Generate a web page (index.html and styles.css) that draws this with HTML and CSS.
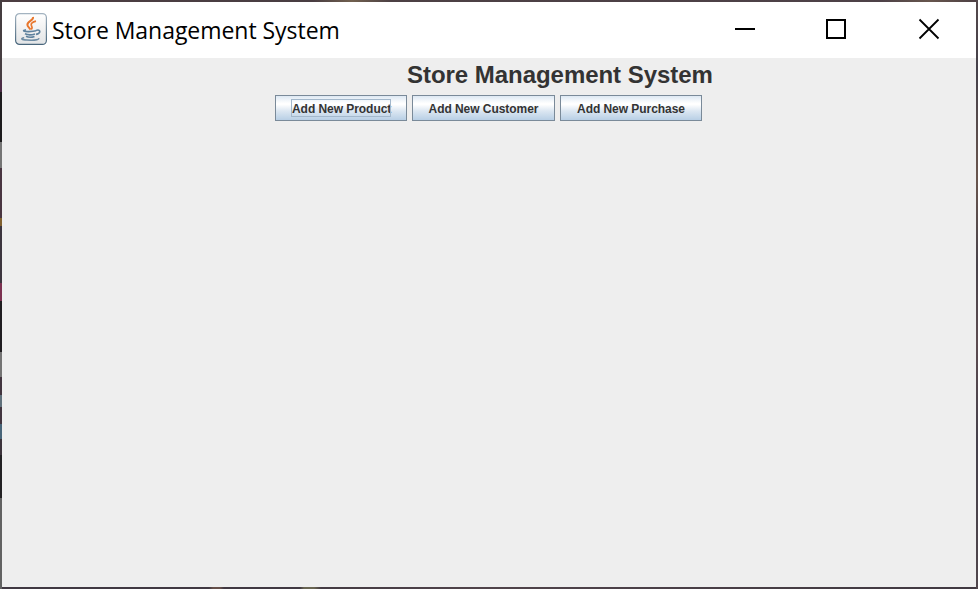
FILE: index.html
```html
<!DOCTYPE html>
<html lang="en">
<head>
<meta charset="utf-8">
<title>Store Management System</title>
<link rel="stylesheet" href="styles.css">
</head>
<body>
<div class="desktop">
  <div class="window">
    <header class="titlebar">
      <svg class="app-icon" width="32" height="32" viewBox="0 0 32 32" fill="none">
        <defs>
          <linearGradient id="tile" x1="0" y1="0" x2="0" y2="1"><stop offset="0" stop-color="#ffffff"/><stop offset=".4" stop-color="#f4f4f4"/><stop offset="1" stop-color="#e2e4e6"/></linearGradient>
          <linearGradient id="rim" x1="0" y1="0" x2="0" y2="1"><stop offset="0" stop-color="#a3b3c0"/><stop offset="1" stop-color="#48667c"/></linearGradient>
        </defs>
        <rect x=".6" y=".6" width="30.8" height="30.8" rx="4" fill="url(#tile)" stroke="url(#rim)" stroke-width="1.2"/>
        <path d="M18 4C19 7.5 12 8.2 12.4 12C12.6 13.7 14.6 14.8 15.5 16.6" stroke="#e8762c" stroke-width="2"/>
        <path d="M21 8.2C17.5 9 15.6 10.4 16.3 12.3C17 13.8 18 14.2 16.3 16.6" stroke="#e8762c" stroke-width="1.7"/>
        <path d="M11 16.7C6.5 17.8 8.8 18.7 14 18.6C17 18.5 19.2 18.3 21 17.8M10 20.8C12.8 22.1 17.3 21.9 20 20.9M11 23.3C13.5 24.5 17 24.4 19.5 23.4M21 17.4C26 15.8 26.1 20.3 21 21.4" stroke="#5f829e" stroke-width="1.6"/>
        <path d="M9.2 24.8C5.2 25.5 6.3 26.8 12 27.1C18 27.4 23.7 26.7 24.1 25.2" stroke="#6d8ba3" stroke-width="1.5"/>
      </svg>
      <span class="caption">Store Management System</span>
      <svg class="controls" width="206" height="24" viewBox="0 0 206 24" fill="none" stroke="#000" stroke-width="2">
        <path d="M0 12H20"/>
        <rect x="92" y="3" width="18" height="18"/>
        <path d="M184.5 2.5L203.5 21.5M203.5 2.5L184.5 21.5" stroke-width="1.8"/>
      </svg>
    </header>
    <main class="content">
      <h1 class="heading">Store Management System</h1>
      <div class="actions">
        <button class="btn btn-product"><span class="label focused">Add New Product</span></button>
        <button class="btn btn-customer"><span class="label">Add New Customer</span></button>
        <button class="btn btn-purchase"><span class="label">Add New Purchase</span></button>
      </div>
    </main>
  </div>
</div>
</body>
</html>
```
FILE: styles.css
```css
* { box-sizing: border-box; }
body { margin: 0; overflow: hidden; }
.desktop {
  width: 978px;
  height: 589px;
  padding: 2px;
  background:
    linear-gradient(to bottom, #453d40 0 80px, #4b2b45 80px 92px, #1c1b1d 92px 142px, #757575 142px 168px, #493540 168px 218px, #80602f 218px 226px, #3c353e 226px 283px, #7b3150 283px 301px, #1f1d20 301px 352px, #747474 352px 377px, #42353f 377px 395px, #60717c 395px 407px, #42353f 407px 424px, #486579 424px 439px, #3c333b 439px 455px, #222123 455px 498px, #626262 498px 589px) left / 2px 100% no-repeat,
    linear-gradient(to bottom, #54484b, #444049 12%, #69554e 30%, #484249 45%, #5c4b50 58%, #45404a 75%, #50464c) right / 2px 100% no-repeat,
    linear-gradient(to right, #4c3d41, #493d42 32%, #71604f 36%, #4c4044 40%, #4d4147 90%, #67564d 95%, #4d4044) top / 100% 2px no-repeat,
    linear-gradient(to right, #403842 0 209px, #66504a 213px 220px, #403842 224px 300px, #696552 304px 314px, #443b43 321px, #50434a 480px, #403941) bottom / 100% 2px no-repeat;
}
.window {
  display: flex;
  flex-direction: column;
  width: 974px;
  height: 585px;
  background: #eee;
}
.titlebar {
  display: flex;
  align-items: center;
  height: 56px;
  padding: 0 35px 2px 13px;
  background: #fff;
}
.caption {
  margin: 1px 0 0 5px;
  font: 23px/32px "Open Sans", sans-serif;
  letter-spacing: -0.04px;
  white-space: nowrap;
  color: #000;
}
.controls { margin-left: auto; }
.content { flex: 1; padding-top: 3px; }
.heading {
  margin: 0 0 0 405px;
  font: bold 24px/28px "Liberation Sans", Arial, sans-serif;
  letter-spacing: -0.04px;
  color: #333;
  white-space: nowrap;
}
.actions {
  display: flex;
  gap: 5px;
  margin: 6px 0 0 273px;
}
.btn {
  display: flex;
  align-items: center;
  justify-content: center;
  height: 26px;
  padding: 0;
  border: 1px solid #7a8a99;
  border-radius: 0;
  background: linear-gradient(to bottom, #dde8f3 0%, #fff 30%, #fff 36%, #dce7f2 62%, #b8cfe5 100%);
  color: #333;
  font: bold 12px/14px "Liberation Sans", Arial, sans-serif;
  letter-spacing: -0.05px;
}
.btn-product { width: 132px; }
.btn-customer { width: 143px; }
.btn-purchase { width: 142px; }
.label {
  height: 16px;
  padding-top: 2px;
  white-space: nowrap;
}
.focused {
  width: 98px;
  outline: 1px solid #a3b8cc;
}
```
